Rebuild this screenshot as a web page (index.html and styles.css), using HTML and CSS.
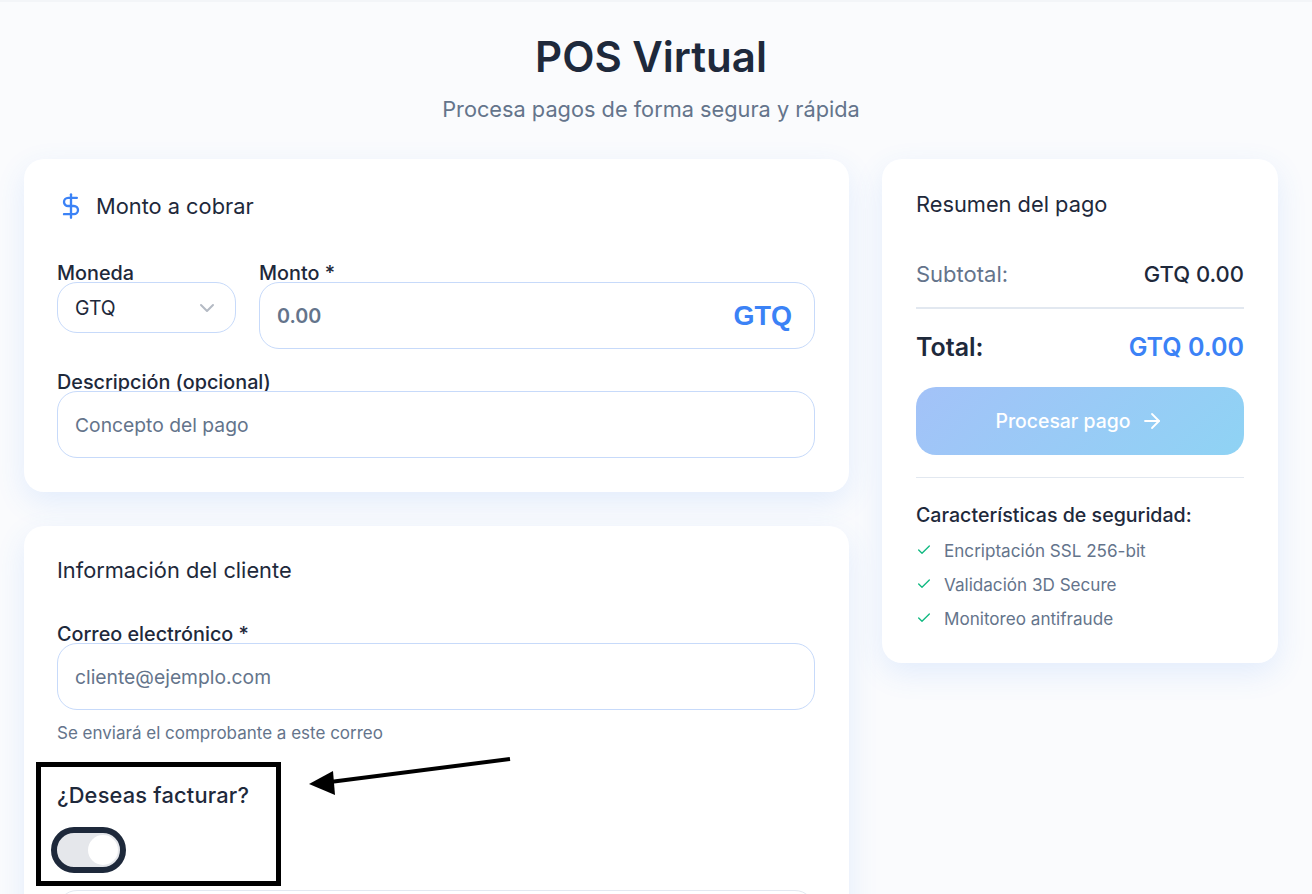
FILE: index.html
```html
<!DOCTYPE html>
<html lang="es">
<head>
<meta charset="utf-8">
<title>POS Virtual</title>
<link rel="stylesheet" href="styles.css">
</head>
<body>
<div class="page">
  <header class="head">
    <h1>POS Virtual</h1>
    <p>Procesa pagos de forma segura y rápida</p>
  </header>
  <div class="layout">
    <main class="main-col">
      <section class="card card-amount">
        <h2 class="card-title">
          <svg class="dollar" viewBox="0 0 24 24" width="28" height="28" fill="none" stroke="#3b82f6" stroke-width="2" stroke-linecap="round" stroke-linejoin="round"><path d="M12 2v20"/><path d="M17 5H9.5a3.5 3.5 0 0 0 0 7h5a3.5 3.5 0 0 1 0 7H6"/></svg>
          Monto a cobrar
        </h2>
        <div class="row">
          <div class="field currency">
            <label>Moneda</label>
            <div class="select">GTQ
              <svg viewBox="0 0 24 24" width="24" height="24" fill="none" stroke="#b4bac4" stroke-width="2" stroke-linecap="round" stroke-linejoin="round"><path d="m6 9 6 6 6-6"/></svg>
            </div>
          </div>
          <div class="field amount">
            <label>Monto *</label>
            <div class="input amount-input"><span class="zero">0.00</span><span class="code">GTQ</span></div>
          </div>
        </div>
        <div class="field">
          <label>Descripción (opcional)</label>
          <div class="input">Concepto del pago</div>
        </div>
      </section>
      <section class="card card-client">
        <h2 class="card-title plain">Información del cliente</h2>
        <div class="field">
          <label>Correo electrónico *</label>
          <div class="input">cliente@ejemplo.com</div>
          <small class="hint">Se enviará el comprobante a este correo</small>
        </div>
        <div class="invoice">
          <div class="invoice-label">¿Deseas facturar?</div>
          <div class="toggle"><span class="knob"></span></div>
        </div>
        <div class="input next"></div>
      </section>
    </main>
    <aside class="card summary">
      <h2 class="summary-title">Resumen del pago</h2>
      <div class="sum-row"><span class="sum-label">Subtotal:</span><span class="sum-value">GTQ 0.00</span></div>
      <div class="total-row"><span>Total:</span><span class="total-value">GTQ 0.00</span></div>
      <button class="pay" type="button">Procesar pago
        <svg viewBox="0 0 24 24" width="24" height="24" fill="none" stroke="#fff" stroke-width="1.8" stroke-linecap="round" stroke-linejoin="round"><path d="M5 12h14"/><path d="m12 5 7 7-7 7"/></svg>
      </button>
      <div class="security">
        <h3>Características de seguridad:</h3>
        <ul>
          <li><svg viewBox="0 0 24 24" width="16" height="16" fill="none" stroke="#10b981" stroke-width="2" stroke-linecap="round" stroke-linejoin="round"><path d="M20 6 9 17l-5-5"/></svg>Encriptación SSL 256-bit</li>
          <li><svg viewBox="0 0 24 24" width="16" height="16" fill="none" stroke="#10b981" stroke-width="2" stroke-linecap="round" stroke-linejoin="round"><path d="M20 6 9 17l-5-5"/></svg>Validación 3D Secure</li>
          <li><svg viewBox="0 0 24 24" width="16" height="16" fill="none" stroke="#10b981" stroke-width="2" stroke-linecap="round" stroke-linejoin="round"><path d="M20 6 9 17l-5-5"/></svg>Monitoreo antifraude</li>
        </ul>
      </div>
    </aside>
  </div>
  <div class="note-box"></div>
  <svg class="note-arrow" viewBox="0 0 210 50" width="210" height="50"><path d="M21 30 201 7" stroke="#000" stroke-width="4" fill="none"/><path d="M0 32 24 19 26 43Z" fill="#000"/></svg>
</div>
</body>
</html>
```
FILE: styles.css
```css
* { box-sizing: border-box; }
html, body { margin: 0; height: 894px; overflow: hidden; }
body {
  font-family: Inter, "Liberation Sans", sans-serif;
  color: #1e293b;
  background: #fafbfd;
}
.page {
  position: relative;
  height: 894px;
  padding: 0 34px 0 24px;
  border-top: 2px solid #f3f5f8;
}
.head { text-align: center; padding-top: 31px; height: 157px; }
.head h1 { margin: 0; font-size: 42px; line-height: 48px; font-weight: 600; }
.head p { margin: 14px 0 0; font-size: 21.75px; line-height: 28px; color: #64748b; }
.layout { display: grid; grid-template-columns: 825px 396px; column-gap: 33px; align-items: start; }
.main-col { display: flex; flex-direction: column; gap: 34px; }
.card {
  background: #fff;
  border-radius: 20px;
  box-shadow: 0 10px 30px rgba(59, 130, 246, 0.12);
}
.card-amount { padding: 33px 34px 33px 33px; height: 333px; }
.card-client { padding: 29px 34px 0 33px; height: 500px; }
.card-title {
  display: flex;
  align-items: center;
  gap: 11px;
  margin: 0 0 43px;
  height: 28px;
  font-size: 21.8px;
  line-height: 28px;
  font-weight: 400;
}
.card-title.plain { margin-bottom: 39px; height: 30px; }
.row { display: flex; gap: 23px; margin-bottom: 23px; }
.field { display: flex; flex-direction: column; }
.field label { font-size: 19.8px; line-height: 20px; font-weight: 450; height: 19px; }
.currency { width: 179px; }
.amount { flex: 1; }
.select {
  height: 51px;
  padding: 0 16px 0 17px;
  display: flex;
  align-items: center;
  justify-content: space-between;
  border: 1px solid #c7dafa;
  border-radius: 20px;
  font-size: 19.4px;
}
.input {
  height: 67px;
  padding: 1px 17px 0;
  display: flex;
  align-items: center;
  border: 1px solid #c7dafa;
  border-radius: 20px;
  font-size: 19.3px;
  color: #64748b;
  background: #fff;
}
.amount-input { justify-content: space-between; padding-right: 22px; }
.zero { font-weight: 600; font-size: 19.8px; }
.code { font-family: "Liberation Sans", Arial, sans-serif; font-weight: 700; font-size: 27px; color: #3b82f6; }
.hint { margin-top: 14px; font-size: 17px; line-height: 18px; color: #64748b; }
.invoice { margin-top: 41px; }
.invoice-label { font-size: 21.8px; line-height: 24px; font-weight: 450; padding-bottom: 2px; letter-spacing: 0.2px; }
.toggle {
  margin: 18px 0 0 -6px;
  width: 75px;
  height: 46px;
  background: #e5e7eb;
  border: 6px solid #1e293b;
  border-radius: 23px;
  padding: 2px 2px 2px 31px;
}
.knob { display: block; width: 30px; height: 30px; border-radius: 50%; background: #fff; }
.next { margin-top: 17px; border-color: #e2e8f0; }
.summary { padding: 30px 34px 0; height: 504px; }
.summary-title { margin: 0 0 41px; font-size: 21.8px; line-height: 30px; font-weight: 400; }
.sum-row {
  display: flex;
  justify-content: space-between;
  font-size: 22px;
  line-height: 28px;
  padding-bottom: 19px;
  border-bottom: 2px solid #e2e8f0;
}
.sum-label { color: #64748b; }
.sum-value { font-weight: 500; }
.total-row {
  display: flex;
  justify-content: space-between;
  margin-top: 22px;
  font-size: 25px;
  line-height: 32px;
  font-weight: 600;
}
.total-value { color: #3b82f6; }
.pay {
  display: flex;
  align-items: center;
  justify-content: center;
  gap: 10px;
  width: 100%;
  height: 68px;
  margin-top: 24px;
  border: 0;
  border-radius: 20px;
  background: linear-gradient(135deg, #a3c2f8, #8fd3f4);
  color: #fff;
  font: 500 19.4px Inter, "Liberation Sans", sans-serif;
}
.security { margin-top: 22px; padding-top: 25px; border-top: 1px solid #e2e8f0; }
.security h3 { margin: 0 0 6px; font-size: 19.6px; line-height: 24px; font-weight: 500; }
.security ul { list-style: none; margin: 0; padding: 0; }
.security li {
  display: flex;
  align-items: center;
  gap: 12px;
  height: 34px;
  font-size: 17.1px;
  color: #64748b;
}
.note-box {
  position: absolute;
  left: 36px;
  top: 760px;
  width: 245px;
  height: 124px;
  border: 5px solid #000;
}
.note-arrow { position: absolute; left: 309px; top: 750px; }
```
